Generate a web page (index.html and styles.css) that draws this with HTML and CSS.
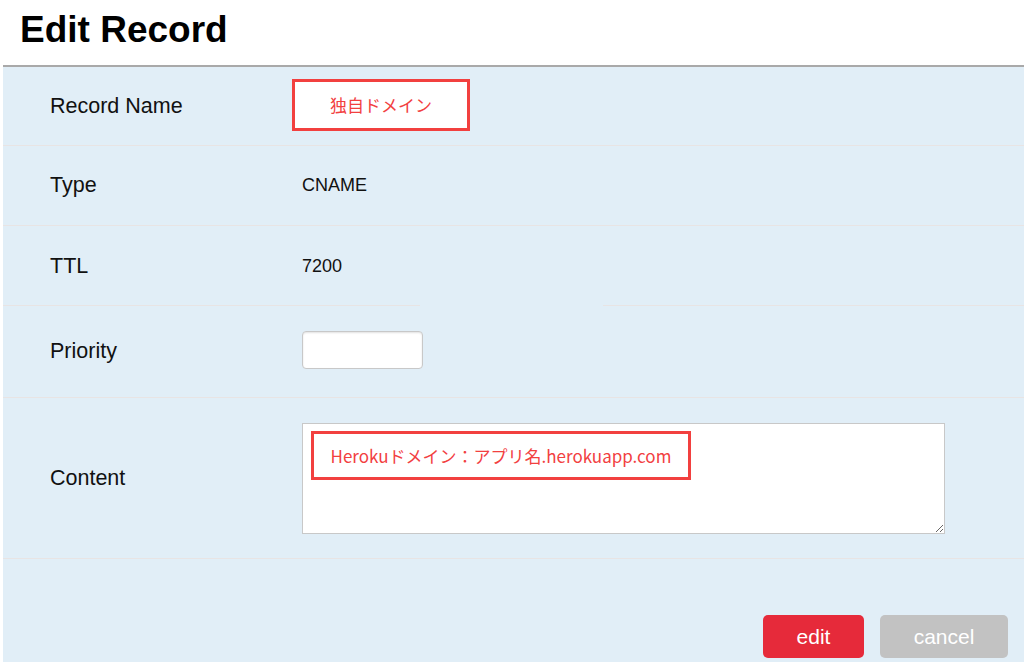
FILE: index.html
```html
<!DOCTYPE html>
<html lang="ja">
<head>
<meta charset="utf-8">
<title>Edit Record</title>
<link rel="stylesheet" href="styles.css">
</head>
<body>
<header class="page-head">
  <h1 class="title">Edit Record</h1>
</header>
<section class="panel">
  <div class="row row-name">
    <div class="label">Record Name</div>
    <div class="value"><span class="note note-name">独自ドメイン</span></div>
  </div>
  <div class="row row-type">
    <div class="label">Type</div>
    <div class="value text">CNAME</div>
  </div>
  <div class="row row-ttl">
    <div class="label">TTL</div>
    <div class="value text">7200</div>
  </div>
  <div class="row row-priority">
    <div class="label">Priority</div>
    <div class="value"><input class="field-small" type="text"></div>
  </div>
  <div class="row row-content">
    <div class="label">Content</div>
    <div class="value">
      <div class="area-wrap">
        <textarea class="area"></textarea>
        <span class="note note-content">Herokuドメイン：アプリ名.herokuapp.com</span>
      </div>
    </div>
  </div>
  <div class="actions">
    <button class="btn btn-edit" type="button">edit</button>
    <button class="btn btn-cancel" type="button">cancel</button>
  </div>
</section>
</body>
</html>
```
FILE: styles.css
```css
html, body {
  margin: 0;
  padding: 0;
  background: #ffffff;
  font-family: "Liberation Sans", Arial, "Noto Sans CJK JP", sans-serif;
  color: #111111;
}

.page-head {
  height: 65px;
  padding-left: 20px;
  box-sizing: border-box;
}

.title {
  margin: 0;
  font-size: 37px;
  line-height: 60px;
  font-weight: bold;
  color: #000000;
}

.panel {
  margin-left: 3px;
  background: #e1eef7;
  border-top: 2px solid #a9a9a9;
  min-height: 597px;
  box-sizing: border-box;
}

.row {
  display: grid;
  grid-template-columns: 299px 1fr;
  align-items: center;
  border-bottom: 1px solid #e8e4e4;
  box-sizing: border-box;
}

.row-name { height: 79px; }
.row-type { height: 80px; }
.row-ttl {
  height: 80px;
  border-bottom: none;
  background-image: linear-gradient(to right, #e8e4e4 0, #e8e4e4 417px, transparent 417px, transparent 600px, #e8e4e4 600px);
  background-size: 100% 1px;
  background-position: left bottom;
  background-repeat: no-repeat;
}
.row-priority { height: 92px; }
.row-content { height: 161px; }

.label {
  padding-left: 47px;
  font-size: 21.5px;
  color: #111111;
}

.value.text {
  font-size: 18px;
  color: #111111;
}

.note {
  display: inline-block;
  box-sizing: border-box;
  border: 3px solid #f2403f;
  background: #ffffff;
  color: #f2403f;
  font-family: "Noto Sans CJK JP", "Liberation Sans", sans-serif;
  font-size: 17px;
  text-align: center;
}

.note-name {
  margin-left: -10px;
  width: 178px;
  height: 52px;
  line-height: 46px;
  margin-top: -2px;
}

.field-small {
  display: block;
  width: 121px;
  height: 38px;
  box-sizing: border-box;
  border: 1px solid #c8c8c8;
  border-radius: 4px;
  background: #ffffff;
  box-shadow: inset 0 1px 2px rgba(0, 0, 0, 0.12);
  margin-top: -4px;
}

.area-wrap {
  position: relative;
  width: 643px;
  height: 111px;
}

.area {
  display: block;
  width: 643px;
  height: 111px;
  box-sizing: border-box;
  border: 1px solid #c8c8c8;
  background: #ffffff;
  margin: 0;
  padding: 0;
}

.note-content {
  position: absolute;
  left: 9px;
  top: 8px;
  width: 380px;
  height: 49px;
  line-height: 43px;
  font-size: 17px;
}

.actions {
  display: flex;
  justify-content: flex-end;
  gap: 16px;
  padding: 56px 16px 0 0;
}

.btn {
  height: 43px;
  border: none;
  border-radius: 5px;
  color: #ffffff;
  font-family: "Liberation Sans", Arial, sans-serif;
  font-size: 21px;
  padding: 0;
  cursor: pointer;
}

.btn-edit {
  width: 101px;
  background: #e62a3a;
}

.btn-cancel {
  width: 128px;
  background: #c2c2c2;
}
```
